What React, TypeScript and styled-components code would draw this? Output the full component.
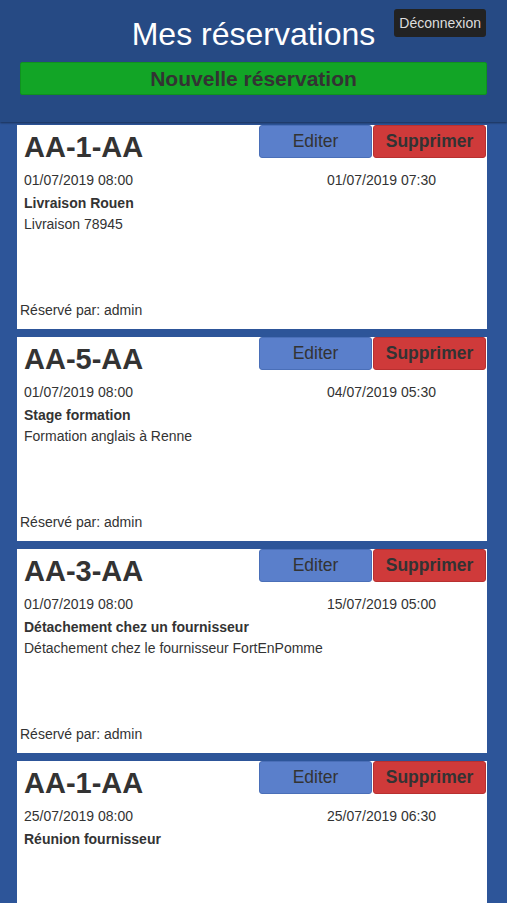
import styled, { createGlobalStyle } from "styled-components";

const GlobalStyle = createGlobalStyle`
  html, body {
    margin: 0;
    padding: 0;
    background: #2d5599;
    font-family: "Liberation Sans", Arial, sans-serif;
  }
  * { box-sizing: border-box; }
`;

const Page = styled.div`
  min-height: 100vh;
  background: #2d5599;
`;

const Header = styled.header`
  position: relative;
  height: 122px;
  background: #264a84;
  box-shadow: 0 1px 2px rgba(0, 0, 0, 0.45);
  padding: 14px 20px 0 20px;
  display: flex;
  flex-direction: column;
  align-items: center;
`;

const Title = styled.h1`
  margin: 0;
  font-size: 32px;
  font-weight: 400;
  line-height: 40px;
  color: #ffffff;
`;

const LogoutButton = styled.button`
  position: absolute;
  top: 9px;
  right: 21px;
  height: 28px;
  padding: 0 5px;
  border: none;
  border-radius: 3px;
  background: #222222;
  color: #dddddd;
  font-family: inherit;
  font-size: 14px;
`;

const NewButton = styled.button`
  margin-top: 8px;
  width: 100%;
  height: 33px;
  border: 1px solid #0f921f;
  border-radius: 2px;
  background: #12a526;
  color: #333333;
  font-family: inherit;
  font-size: 21px;
  font-weight: 700;
`;

const List = styled.main`
  padding: 3px 20px 0 17px;
  display: flex;
  flex-direction: column;
  gap: 8px;
`;

const Card = styled.section`
  height: 204px;
  background: #ffffff;
  color: #333333;
  display: flex;
  flex-direction: column;
`;

const CardTop = styled.div`
  display: flex;
  justify-content: space-between;
  align-items: flex-start;
`;

const Plate = styled.h2`
  margin: 8px 0 0 7px;
  font-size: 29px;
  line-height: 29px;
  font-weight: 700;
`;

const Actions = styled.div`
  display: flex;
  gap: 1px;
  margin: 0 1px 0 0;
`;

const ActionButton = styled.button<{ $danger?: boolean }>`
  width: 113px;
  height: 33px;
  border-radius: 3px;
  border: 1px solid ${({ $danger }) => ($danger ? "#b83030" : "#4a6fb8")};
  background: ${({ $danger }) => ($danger ? "#cf3a3a" : "#5a7fcb")};
  color: #333333;
  font-family: inherit;
  font-size: 17.5px;
  font-weight: ${({ $danger }) => ($danger ? 700 : 400)};
`;

const Dates = styled.div`
  margin-top: 8px;
  padding-left: 7px;
  display: grid;
  grid-template-columns: 1fr 160px;
  font-size: 14px;
  line-height: 21px;
`;

const Label = styled.div`
  margin-top: 2px;
  padding-left: 7px;
  font-size: 14px;
  line-height: 21px;
  font-weight: 700;
`;

const Description = styled.div`
  padding-left: 7px;
  font-size: 14px;
  line-height: 21px;
`;

const Footer = styled.div`
  margin-top: auto;
  padding: 0 0 8px 3px;
  font-size: 14px;
  line-height: 21px;
`;

type Reservation = {
  plate: string;
  start: string;
  end: string;
  label: string;
  description?: string;
  user: string;
};

const reservations: Reservation[] = [
  { plate: "AA-1-AA", start: "01/07/2019 08:00", end: "01/07/2019 07:30", label: "Livraison Rouen", description: "Livraison 78945", user: "admin" },
  { plate: "AA-5-AA", start: "01/07/2019 08:00", end: "04/07/2019 05:30", label: "Stage formation", description: "Formation anglais à Renne", user: "admin" },
  { plate: "AA-3-AA", start: "01/07/2019 08:00", end: "15/07/2019 05:00", label: "Détachement chez un fournisseur", description: "Détachement chez le fournisseur FortEnPomme", user: "admin" },
  { plate: "AA-1-AA", start: "25/07/2019 08:00", end: "25/07/2019 06:30", label: "Réunion fournisseur", user: "admin" },
];

export default function App() {
  return (
    <Page>
      <GlobalStyle />
      <Header>
        <Title>Mes réservations</Title>
        <LogoutButton>Déconnexion</LogoutButton>
        <NewButton>Nouvelle réservation</NewButton>
      </Header>
      <List>
        {reservations.map((r, i) => (
          <Card key={i}>
            <CardTop>
              <Plate>{r.plate}</Plate>
              <Actions>
                <ActionButton>Editer</ActionButton>
                <ActionButton $danger>Supprimer</ActionButton>
              </Actions>
            </CardTop>
            <Dates>
              <span>{r.start}</span>
              <span>{r.end}</span>
            </Dates>
            <Label>{r.label}</Label>
            {r.description && <Description>{r.description}</Description>}
            <Footer>Réservé par: {r.user}</Footer>
          </Card>
        ))}
      </List>
    </Page>
  );
}
